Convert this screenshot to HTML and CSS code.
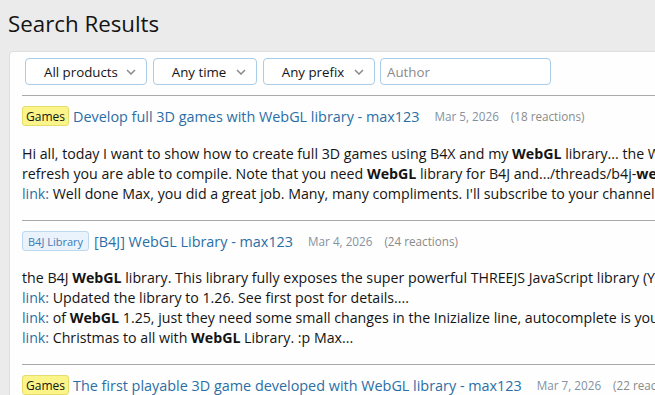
FILE: index.html
```html
<!DOCTYPE html>
<html>
<head>
<meta charset="utf-8">
<link rel="stylesheet" href="styles.css">
</head>
<body>
<h1 class="page-title">Search Results</h1>
<div class="panel">
  <div class="filters">
    <div class="select sel-products"><span>All products</span><svg class="chev" viewBox="0 0 10 6" width="10" height="6"><path d="M1 1l4 4 4-4" fill="none" stroke="#8a8a8a" stroke-width="1.5"/></svg></div>
    <div class="select sel-time"><span>Any time</span><svg class="chev" viewBox="0 0 10 6" width="10" height="6"><path d="M1 1l4 4 4-4" fill="none" stroke="#8a8a8a" stroke-width="1.5"/></svg></div>
    <div class="select sel-prefix"><span>Any prefix</span><svg class="chev" viewBox="0 0 10 6" width="10" height="6"><path d="M1 1l4 4 4-4" fill="none" stroke="#8a8a8a" stroke-width="1.5"/></svg></div>
    <div class="input">Author</div>
  </div>
  <ul class="results">
    <li class="result">
      <div class="result-head"><span class="tag tag-games">Games</span><a class="result-title">Develop full 3D games with WebGL library - max123</a><span class="meta date">Mar 5, 2026</span><span class="meta">(18 reactions)</span></div>
      <div class="snippet">
        <div class="line">Hi all, today I want to show how to create full 3D games using B4X and my <b>WebGL</b> library... the WebGL</div>
        <div class="line">refresh you are able to compile. Note that you need <b>WebGL</b> library for B4J and.../threads/b4j-<b>webgl</b></div>
        <div class="line"><span class="lnk">link:</span> Well done Max, you did a great job. Many, many compliments. I'll subscribe to your channel</div>
      </div>
    </li>
    <li class="result r2">
      <div class="result-head"><span class="tag tag-lib">B4J Library</span><a class="result-title">[B4J] WebGL Library - max123</a><span class="meta date">Mar 4, 2026</span><span class="meta">(24 reactions)</span></div>
      <div class="snippet">
        <div class="line">the B4J <b>WebGL</b> library. This library fully exposes the super powerful THREEJS JavaScript library (You</div>
        <div class="line"><span class="lnk">link:</span> Updated the library to 1.26. See first post for details....</div>
        <div class="line"><span class="lnk">link:</span> of <b>WebGL</b> 1.25, just they need some small changes in the Inizialize line, autocomplete is your</div>
        <div class="line"><span class="lnk">link:</span> Christmas to all with <b>WebGL</b> Library. :p Max...</div>
      </div>
    </li>
    <li class="result">
      <div class="result-head"><span class="tag tag-games">Games</span><a class="result-title">The first playable 3D game developed with WebGL library - max123</a><span class="meta date">Mar 7, 2026</span><span class="meta">(22 reactions)</span></div>
    </li>
  </ul>
</div>
</body>
</html>
```
FILE: styles.css
```css
html, body {
  margin: 0;
  padding: 0;
  height: 100%;
  overflow: hidden;
}
body {
  background: #ebebeb;
  font-family: "Open Sans", "Noto Sans", sans-serif;
  color: #141414;
  font-size: 13px;
}
.page-title {
  margin: 0;
  padding: 9px 0 0 8px;
  height: 51px;
  box-sizing: border-box;
  font-weight: 400;
  font-size: 22.3px;
  line-height: 30px;
  color: #141414;
}
.panel {
  margin-left: 9px;
  background: #fefefe;
  border: 1px solid #dedede;
  border-right: none;
  border-radius: 4px 0 0 0;
  padding: 6px 0 0 12px;
  width: 1200px;
}
.filters {
  display: flex;
  gap: 6px;
  padding-left: 3px;
  padding-bottom: 10px;
  border-bottom: 1px solid #a9a9a9;
}
.select, .input {
  box-sizing: border-box;
  height: 27px;
  border: 1px solid #a9cde8;
  border-radius: 4px;
  display: flex;
  align-items: center;
  background: #fff;
  font-size: 13.3px;
}
.select span {
  flex: 1;
  text-align: center;
}
.chev { margin-right: 10px; }
.sel-products { width: 122px; padding-left: 10px; }
.sel-time { width: 104px; padding-left: 8px; }
.sel-prefix { width: 112px; padding-left: 8px; }
.input {
  width: 171px;
  margin-left: -1px;
  padding-left: 6px;
  color: #8a8a8a;
}
.results {
  list-style: none;
  margin: 0;
  padding: 0;
}
.result {
  padding: 10px 0 16px 0;
  border-bottom: 1px solid #a9a9a9;
}
.result-head {
  display: flex;
  align-items: center;
  height: 20px;
  white-space: nowrap;
}
.tag {
  box-sizing: border-box;
  height: 20px;
  display: inline-flex;
  align-items: center;
  border-radius: 3px;
  padding: 0 3px;
  margin-right: 4px;
}
.tag-games {
  background: #fbf589;
  border: 1px solid #e6dc6c;
  font-size: 12px;
  color: #141414;
}
.tag-lib {
  background: #eaf3fb;
  border: 1px solid #bcd8ef;
  font-size: 11px;
  color: #3c7bb5;
  padding: 0 5px;
  margin-right: 5px;
}
.result-title {
  color: #2b6ea6;
  font-size: 14.4px;
  margin-right: 15px;
}
.meta {
  color: #8a8a8a;
  font-size: 11.7px;
  margin-right: 12px;
}
.meta.date { color: #8592a2; }
.snippet {
  margin-top: 18px;
  font-size: 14.2px;
}
.r2 .snippet { margin-top: 17px; }
.line {
  white-space: nowrap;
  line-height: 20px;
}
.line b { font-weight: 700; }
.lnk { color: #2b6ea6; }
```
